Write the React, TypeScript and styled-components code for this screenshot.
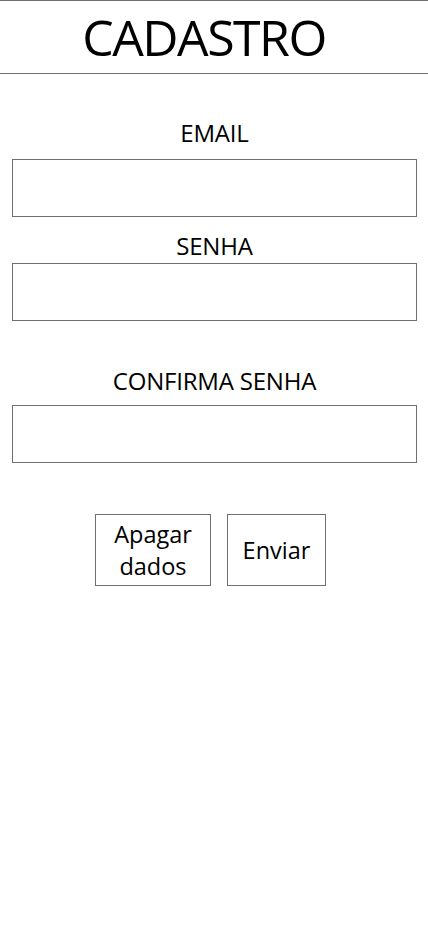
import React from "react";
import styled, { createGlobalStyle } from "styled-components";

const GlobalStyle = createGlobalStyle`
  html, body {
    margin: 0;
    padding: 0;
    background: #ffffff;
  }
  body {
    font-family: "Open Sans", "Noto Sans", "Liberation Sans", sans-serif;
    color: #000000;
  }
  * { box-sizing: border-box; }
`;

const Page = styled.div`
  width: 428px;
  min-height: 926px;
  display: flex;
  flex-direction: column;
`;

const Header = styled.header`
  height: 74px;
  border-top: 1px solid #707070;
  border-bottom: 1px solid #707070;
  display: flex;
  align-items: center;
  justify-content: center;
  padding-right: 20px;
`;

const Title = styled.h1`
  margin: 0;
  font-size: 50px;
  font-weight: 400;
  line-height: 1;
  letter-spacing: -1.5px;
`;

const Form = styled.form`
  display: flex;
  flex-direction: column;
  padding: 0 11px 0 12px;
`;

const Field = styled.div<{ $top: number; $gap: number }>`
  display: flex;
  flex-direction: column;
  align-items: center;
  margin-top: ${(p) => p.$top}px;
  gap: ${(p) => p.$gap}px;
`;

const Label = styled.label`
  font-size: 24px;
  line-height: 32px;
  font-weight: 400;
  text-align: center;
  letter-spacing: -0.2px;
`;

const Input = styled.input`
  width: 100%;
  height: 58px;
  border: 1px solid #707070;
  border-radius: 0;
  background: #ffffff;
  outline: none;
  padding: 0 8px;
  font: inherit;
`;

const Actions = styled.div`
  display: flex;
  justify-content: center;
  gap: 16px;
  margin-top: 51px;
  padding-right: 8px;
`;

const Button = styled.button<{ $width: number }>`
  width: ${(p) => p.$width}px;
  height: 72px;
  border: 1px solid #707070;
  border-radius: 0;
  background: #ffffff;
  color: #000000;
  font-family: inherit;
  font-size: 23.5px;
  line-height: 32px;
  padding: 0;
  cursor: pointer;
`;

export default function App() {
  return (
    <Page>
      <GlobalStyle />
      <Header>
        <Title>CADASTRO</Title>
      </Header>
      <Form onSubmit={(e) => e.preventDefault()}>
        <Field $top={43} $gap={10}>
          <Label htmlFor="email">EMAIL</Label>
          <Input id="email" type="email" />
        </Field>
        <Field $top={13} $gap={1}>
          <Label htmlFor="senha">SENHA</Label>
          <Input id="senha" type="password" />
        </Field>
        <Field $top={44} $gap={8}>
          <Label htmlFor="confirma">CONFIRMA SENHA</Label>
          <Input id="confirma" type="password" />
        </Field>
        <Actions>
          <Button type="button" $width={116}>
            Apagar
            <br />
            dados
          </Button>
          <Button type="submit" $width={99}>
            Enviar
          </Button>
        </Actions>
      </Form>
    </Page>
  );
}
